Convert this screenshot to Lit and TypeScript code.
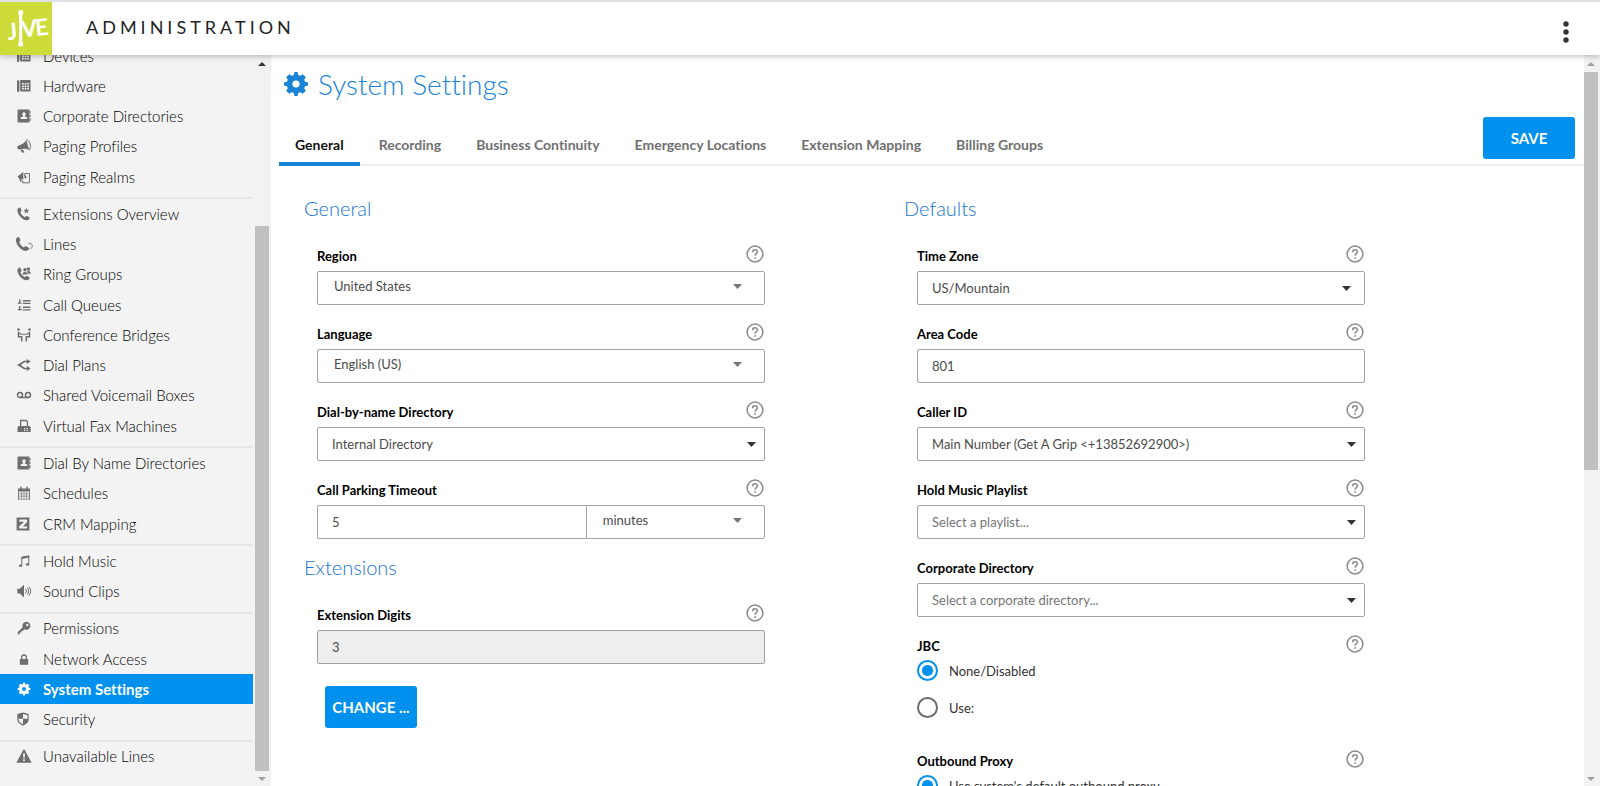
import { LitElement, html, svg, css, nothing, SVGTemplateResult } from "lit";
import { customElement, property, state } from "lit/decorators.js";
import { classMap } from "lit/directives/class-map.js";

const GEAR =
  "M8.7 0h2.6l.5 2.5 1.7.7L15.6 1.8l2.6 2.6-1.4 2.1.7 1.7 2.5.5v2.6l-2.5.5-.7 1.7 1.4 2.1-2.6 2.6-2.1-1.4-1.7.7-.5 2.5H8.7l-.5-2.5-1.7-.7-2.1 1.4-2.6-2.6 1.4-2.1-.7-1.7L0 11.3V8.7l2.5-.5.7-1.7-1.4-2.1 2.6-2.6 2.1 1.4 1.7-.7zM10 7a3 3 0 1 0 0 6 3 3 0 0 0 0-6z";

const HANDSET =
  "M1.2 1.2C2.2.1 3.2.4 3.7 1.5l.8 1.7c.2.6 0 1-.6 1.5-.5.4-.5.7-.2 1.3.8 1.6 1.9 2.8 3.4 3.7.6.4 1 .4 1.4-.1.5-.6.9-.8 1.5-.5l1.9 1c1 .5 1.1 1.3.2 2.2-1.4 1.4-3.6 1.4-6-.1C3.6 10.5 1.7 8.2.8 5.6.2 3.8.2 2.3 1.2 1.2z";

const ICONS: Record<string, SVGTemplateResult> = {
  phone: svg`<path fill-rule="evenodd" d="M0 1.5h2.4v9.8L1.8 13H.6L0 12zM3.2 1h10.3v11.5H3.2zM5 4v1.6h1.8V4zm2.6 0v1.6h1.8V4zm2.6 0v1.6H12V4zM5 6.4V8h1.8V6.4zm2.6 0V8h1.8V6.4zm2.6 0V8H12V6.4zM5 8.8v1.6h1.8V8.8zm2.6 0v1.6h1.8V8.8zm2.6 0v1.6H12V8.8z"/>`,
  book: svg`<path fill-rule="evenodd" d="M1.5.5h10.9v13H1.5a1 1 0 0 1-1-1v-11a1 1 0 0 1 1-1zM7 3.2c-1.2 0-1.8.9-1.7 2 .1.9.4 1.4.8 1.8v.6l-2.4 1V10h6.6V8.6l-2.4-1V7c.5-.4.8-.9.8-1.8.1-1.1-.5-2-1.7-2z"/><path d="M12.4 2h1.2v2.3h-1.2zM12.4 5.8h1.2v2.3h-1.2zM12.4 9.6h1.2v2.3h-1.2z"/>`,
  horn: svg`<path d="M.3 8.2C.3 7 1.2 6.6 2.6 6.2 5.5 5.2 7.8 3.5 9.3 1l2.9 10c-2.4-1.2-4.6-1.6-7.2-1.1l-2.7.5C1 10.5.3 9.6.3 8.2zM3.4 10.8l2.4-.3 1.7 3-2.3.3z"/><path d="M9.4.8c1.9-.2 3.9 3.2 4 6.4 0 2.2-.5 3.7-1.3 3.9" fill="none" stroke="currentColor" stroke-width="1"/>`,
  realm: svg`<path d="M.5 6.5 6.3 2v7.5l-2-.6.4 2.6H3L2.4 8.800z"/><path d="M7.5 3.5h4.9v9.3H5.6v-2.3M7.8 4v2.5" fill="none" stroke="currentColor" stroke-width="1"/><path d="M7.5 4.5 10 7.2 7.500 9z"/>`,
  overview: svg`<path d="${HANDSET}"/><path d="m9.3.8.8 2 2.1.1-1.6 1.4.6 2.1-1.900-1.200-1.800 1.200.6-2.100-1.700-1.400 2.200-.1z"/>`,
  lines: svg`<g transform="translate(-1.5 -.5) scale(1.08)"><path d="${HANDSET}"/></g><path d="M11.5 6.600c2.200-.4 3.800.5 3.800 2.200 0 1.500-.7 2.600-2 3.200" fill="none" stroke="currentColor" stroke-width=".9"/>`,
  ring: svg`<path d="${HANDSET}"/><circle cx="8" cy="2.8" r="1.7"/><circle cx="11.4" cy="2" r="1.7"/><path d="M5.5 7.4c0-1.6 1-2.4 2.5-2.4s2.300.8 2.300 2.400zM10 4.500c2.400-1 3.700 0 3.700 2.200h-3z"/>`,
  queue: svg`<path d="M5.8 2h7.7v1.4H5.8zM5.8 4.7h7.7v1.2H5.8zM5.8 8.5h7.7v1.4H5.8zM5.8 11.2h7.7v1.4H5.8zM2 1.5h1.4v3h1.2v1.3H.8V4.5H2zM2 8h1.4v3h1.2v1.3H.8V11H2z"/>`,
  bridge: svg`<circle cx="1.5" cy="1.5" r="1.3"/><circle cx="12.5" cy="1.5" r="1.3"/><path d="M1.5 3.8v5h3.2v4.7M12.5 3.8v5H9.3v4.7" fill="none" stroke="currentColor" stroke-width="1.5"/><path d="M1.5 4.5 4 6.2h6l2.5-1.7" fill="none" stroke="currentColor" stroke-width="1.1"/>`,
  plan: svg`<path d="M10.5 3.5H7.2L2 7l5.2 3.5h3.3" fill="none" stroke="currentColor" stroke-width="1.6"/><path d="M9.8.9 13.7 3.5 9.8 6.1zM9.8 7.9l3.9 2.6-3.9 2.6zM0 7l4.2-2v4z"/>`,
  voicemail: svg`<circle cx="3" cy="7" r="2.5" fill="none" stroke="currentColor" stroke-width="1.5"/><circle cx="11" cy="7" r="2.5" fill="none" stroke="currentColor" stroke-width="1.5"/><path d="M3 8.8h8v1.5H3z"/>`,
  fax: svg`<path d="M3.6 7V1.5h5.2l1.7 1.6V7" fill="none" stroke="currentColor" stroke-width="1.3"/><path fill-rule="evenodd" d="M1.5 7h11l1.2 1.5V13H.5V8.5zM7 9v1.2h1.3V9zm2.5 0v1.2h1.3V9zM7 11v1h1.3v-1zm2.5 0v1h1.3v-1z"/>`,
  calendar: svg`<path fill-rule="evenodd" d="M1 2.5h12v11H1zm.9 3v7.2h10.2V5.5z"/><path d="M3.2.8h1.6v2.4H3.2zM9.2.8h1.6v2.4H9.2z"/><path d="M2 7.8h10M2 10.2h10M4.5 5.5v7M7 5.5v7M9.5 5.5v7" stroke="currentColor" stroke-width=".6"/>`,
  crm: svg`<path fill-rule="evenodd" d="M-.4.5h12.8v13H-.4zM2.4 2.6v2.2h4.700L2.2 9.3V11.6h7.9V9.4H5.8l4.3-4.3V2.6z"/>`,
  music: svg`<path d="M4.8 3.2 11.8 2v8.2M4.8 11.5V3.2" fill="none" stroke="currentColor" stroke-width="1"/><path d="M4.6 3l7.5-1.4v2L4.6 5z"/><ellipse cx="3.6" cy="11.7" rx="1.7" ry="1.2"/><ellipse cx="10.5" cy="10.5" rx="1.7" ry="1.2"/>`,
  sound: svg`<path d="M.3 4.8h2.5L7 .8v12.7L2.8 9.5H.3z"/><path d="M8.6 5a3 3 0 0 1 0 4.3M10.2 3.8a5 5 0 0 1 0 6.7M11.9 2.7a7 7 0 0 1 0 8.9" fill="none" stroke="currentColor" stroke-width="1"/>`,
  key: svg`<path fill-rule="evenodd" d="M9.5.8a4 4 0 1 1-2 7.5L6.3 9.5 4.8 9.8l-.3 1.5-1.5.3-.5 1.7H.7v-2l5-5A4 4 0 0 1 9.5.8zm.8 2a1.2 1.2 0 1 0 0 2.4 1.2 1.2 0 0 0 0-2.4z"/>`,
  lock: svg`<path d="M2.8 7h8.4v5.8H2.8z"/><path d="M4.7 7.5V5.3a2.3 2.3 0 0 1 4.6 0v2.2" fill="none" stroke="currentColor" stroke-width="1.3"/>`,
  gear: svg`<g transform="translate(.5 .5) scale(.65)"><path fill-rule="evenodd" d="${GEAR}"/></g>`,
  shield: svg`<path d="M6 .5 11.7 2v5.3c0 3-2.5 4.9-5.7 6.4C2.8 12.2.3 10.3.3 7.3V2z"/><path fill="#f3f3f3" d="M6 2v4.8h4.6V3.2zM1.5 6.8H6v5.5C3.4 11 1.5 9.5 1.5 7z"/>`,
  warning: svg`<path fill-rule="evenodd" d="M7-.3 14.7 13.7H-.7zM6 4.5l.4 4.7h1.2L8 4.5zm.1 5.700V12h1.800v-1.800z"/>`,
};

const icon = (name: string) =>
  html`<svg class="glyph" viewBox="0 0 14 14" width="14" height="14" fill="currentColor" aria-hidden="true">${ICONS[name]}</svg>`;

const NAV: [string, string][][] = [
  [["phone", "Devices"], ["phone", "Hardware"], ["book", "Corporate Directories"], ["horn", "Paging Profiles"], ["realm", "Paging Realms"]],
  [["overview", "Extensions Overview"], ["lines", "Lines"], ["ring", "Ring Groups"], ["queue", "Call Queues"], ["bridge", "Conference Bridges"], ["plan", "Dial Plans"], ["voicemail", "Shared Voicemail Boxes"], ["fax", "Virtual Fax Machines"]],
  [["book", "Dial By Name Directories"], ["calendar", "Schedules"], ["crm", "CRM Mapping"]],
  [["music", "Hold Music"], ["sound", "Sound Clips"]],
  [["key", "Permissions"], ["lock", "Network Access"], ["gear", "System Settings"], ["shield", "Security"]],
  [["warning", "Unavailable Lines"]],
];

const TABS = ["General", "Recording", "Business Continuity", "Emergency Locations", "Extension Mapping", "Billing Groups"];

@customElement("scroll-rail")
class ScrollRail extends LitElement {
  @property({ reflect: true }) variant = "page";

  static styles = css`
    :host {
      display: flex;
      flex-direction: column;
      flex: none;
      width: 16px;
      padding-right: 2px;
      box-sizing: border-box;
      background: #f2f2f2;
    }
    .end {
      flex: none;
      display: grid;
      place-items: center;
      height: 15px;
      color: #a0a0a0;
    }
    .up { height: 17px; }
    .track { flex: 1; display: flex; flex-direction: column; }
    .thumb { height: 57%; background: #c0c0c0; }
    :host([variant="menu"]) .thumb { height: 78%; margin-top: auto; }
    :host([variant="menu"]) .up { color: #333; }
  `;

  render() {
    return html`
      <div class="end up"><svg width="8" height="4" viewBox="0 0 8 4"><path fill="currentColor" d="M4 0l4 4H0z" /></svg></div>
      <div class="track"><div class="thumb"></div></div>
      <div class="end"><svg width="8" height="4" viewBox="0 0 8 4"><path fill="currentColor" d="M0 0h8L4 4z" /></svg></div>
    `;
  }
}

@customElement("app-root")
class AppRoot extends LitElement {
  @state() private page = "System Settings";
  @state() private tab = "General";

  static styles = css`
    :host {
      display: flex;
      flex-direction: column;
      height: 100vh;
      overflow: hidden;
      background: #fff;
      color: #222;
      font-family: Lato, "Open Sans", sans-serif;
      font-size: 14px;
      font-variant-ligatures: none;
    }
    * { box-sizing: border-box; }
    h1, h2, ul { margin: 0; padding: 0; font-weight: 300; list-style: none; }
    a { color: inherit; text-decoration: none; }
    button, input, select { font: inherit; font-variant-ligatures: none; margin: 0; }
    svg { display: block; }

    .header {
      position: relative;
      z-index: 1;
      flex: none;
      display: flex;
      align-items: center;
      height: 55px;
      border-top: 2px solid #e0e0e6;
      background: #fff;
      box-shadow: 0 1px 6px rgba(0, 0, 0, 0.28);
    }
    .logo { width: 52px; height: 53px; background: #cddc39; }
    .mark { font-family: Lato, sans-serif; font-size: 23px; font-weight: 700; fill: #fff; }
    .brand { margin-left: 34px; padding-bottom: 4px; font-size: 18px; letter-spacing: 4px; color: #1f1f1f; }
    .more {
      margin-left: auto;
      margin-right: 23px;
      padding: 6px 8px 0;
      border: 0;
      background: none;
      color: #333;
    }

    .body { flex: 1; display: flex; min-height: 0; }
    .sidebar { flex: none; display: flex; width: 271px; background: #f3f3f3; overflow: hidden; }
    .menu { flex: 1; display: flex; flex-direction: column; justify-content: flex-end; margin: -14px 2px 0 0; padding-bottom: 14px; }
    .item { flex: 1 0 28px; max-height: 31px; display: flex; }
    .rule { flex: none; height: 7px; border-bottom: 2px solid #e6e6e6; }
    .link { flex: 1; display: flex; align-items: center; gap: 12px; padding: 0 0 1px 17px; font-size: 15px; color: #000; }
    .glyph { flex: none; color: #6e6e6e; overflow: visible; }
    .current { background: #0091ee; color: #fff; font-weight: 700; }
    .current .glyph { color: #fff; }

    .main { flex: 1; min-width: 0; display: flex; }
    .content { flex: 1; min-width: 0; overflow: hidden; }
    .title { display: flex; align-items: center; gap: 10px; padding: 11px 13px 0; font-size: 28px; line-height: 36px; color: #1784d8; }
    .bar { display: flex; align-items: flex-end; margin: 15px 0 0 8px; border-bottom: 2px solid #efefef; }
    .tabs { flex: 1; display: flex; gap: 3px; align-self: stretch; align-items: stretch; }
    .tab {
      margin-bottom: -2px;
      padding: 9px 16px 0;
      border: 0;
      border-bottom: 4px solid transparent;
      background: none;
      font-size: 14px;
      font-weight: 700;
      color: #707070;
    }
    .tab.on { border-color: #1784d8; color: #111; }
    .primary {
      flex: none;
      width: 92px;
      height: 42px;
      padding: 0;
      border: 0;
      border-radius: 3px;
      background: #0091ee;
      color: #fff;
      font-weight: 700;
      font-size: 15px;
    }
    .save { margin: 0 9px 5px 0; }

    .columns { display: grid; grid-template-columns: repeat(2, minmax(0, 600px)); padding: 28px 0 0 33px; }
    .column { display: flex; flex-direction: column; gap: 15px; }
    .heading { margin-bottom: 23px; font-size: 20px; line-height: 28px; color: #1976d2; }
    .column .heading + .fields { margin-bottom: -1px; }
    .fields { display: flex; flex-direction: column; gap: 18px; width: 448px; max-width: 90%; margin-left: 13px; }
    .top { display: flex; justify-content: space-between; align-items: flex-start; height: 26px; padding-right: 1px; }
    .label { font-size: 13px; font-weight: 700; line-height: 22px; color: #000; }
    .help { padding: 0; border: 0; background: none; color: #8a8a8a; }
    .box { position: relative; display: flex; }
    .control {
      flex: 1;
      min-width: 0;
      height: 34px;
      padding: 0 14px;
      border: 1px solid #a3a3a3;
      border-radius: 2px;
      background: #fff;
      color: #4c4c4c;
      font-size: 13px;
      outline: none;
      appearance: none;
    }
    .raised { padding: 0 16px 4px; }
    .blank { color: #757575; }
    .control:disabled { background: #eee; opacity: 1; }
    .amount { flex: 0 0 60%; border-right: 0; border-radius: 2px 0 0 2px; }
    .unit { border-radius: 0 2px 2px 0; }
    .arrow { position: absolute; right: 9px; top: 15px; color: #333; pointer-events: none; }
    .arrow.inset { right: 14px; }
    .arrow.soft { right: 23px; top: 13px; color: #777; }
    .change { margin: 4px 0 0 8px; }
    .choices { display: flex; flex-direction: column; gap: 18px; margin-bottom: 15px; }
    .choice { display: flex; align-items: center; gap: 11px; height: 19px; font-size: 13px; color: #333; }
    .radio {
      flex: none;
      appearance: none;
      width: 21px;
      height: 21px;
      margin: 0;
      border: 2px solid #6b6b6b;
      border-radius: 50%;
      background: #fff;
    }
    .radio:checked { border-color: #0091ee; background: radial-gradient(circle, #0091ee 5px, #fff 6px); }
  `;

  private top(label: string, id: string) {
    return html`<div class="top">
      ${id ? html`<label class="label" for=${id}>${label}</label>` : html`<span class="label">${label}</span>`}
      <button class="help" type="button" aria-label="Help: ${label}">
        <svg width="18" height="18" viewBox="0 0 18 18" fill="none" stroke="currentColor" stroke-width="1.5">
          <circle cx="9" cy="9" r="7.9" />
          <path d="M6.6 7.3C6.6 5.7 7.6 4.8 9 4.8s2.4.9 2.4 2.2c0 1.6-2.3 1.8-2.3 3.7" />
          <circle cx="9.1" cy="12.9" r=".9" fill="currentColor" stroke="none" />
        </svg>
      </button>
    </div>`;
  }

  private arrow(kind = "") {
    return html`<svg class="arrow ${kind}" width="9" height="5" viewBox="0 0 9 5" aria-hidden="true"><path fill="currentColor" d="M0 0h9L4.5 5z" /></svg>`;
  }

  private select(label: string, id: string, value: string, kind = "", tone = "") {
    return html`<div>
      ${this.top(label, id)}
      <div class="box">
        <select class="control ${tone}" id=${id}><option>${value}</option></select>
        ${this.arrow(kind)}
      </div>
    </div>`;
  }

  private input(label: string, id: string, value: string, disabled = false) {
    return html`<div>
      ${this.top(label, id)}
      <div class="box"><input class="control" id=${id} .value=${value} ?disabled=${disabled} /></div>
    </div>`;
  }

  private choices(label: string, name: string, options: string[]) {
    return html`<div role="radiogroup" aria-label=${label}>
      ${this.top(label, "")}
      <div class="choices">
        ${options.map(
          (o, i) => html`<label class="choice"><input class="radio" type="radio" name=${name} ?checked=${i === 0} />${o}</label>`
        )}
      </div>
    </div>`;
  }

  render() {
    return html`
      <header class="header">
        <svg class="logo" viewBox="0 0 52 53" role="img" aria-label="Jive">
          <g transform="rotate(-6 26 26)">
            <text class="mark" x="7" y="36">J</text>
            <text class="mark" x="21" y="35">V</text>
            <text class="mark" x="35" y="35">E</text>
          </g>
          <path d="M20.7 11v31" stroke="#fff" stroke-width="3" />
          <circle cx="20.7" cy="10.5" r="2.6" fill="#fff" />
          <circle cx="20.7" cy="42" r="2.6" fill="#fff" />
        </svg>
        <span class="brand">ADMINISTRATION</span>
        <button class="more" type="button" aria-label="More">
          <svg width="6" height="22" viewBox="0 0 6 22" fill="currentColor"><circle cx="3" cy="3" r="2.7" /><circle cx="3" cy="11" r="2.7" /><circle cx="3" cy="19" r="2.7" /></svg>
        </button>
      </header>
      <div class="body">
        <nav class="sidebar">
          <ul class="menu">
            ${NAV.map(
              (group, g) => html`
                ${g ? html`<li class="rule" role="separator"></li>` : nothing}
                ${group.map(
                  ([glyph, text]) => html`<li class="item">
                    <a class=${classMap({ link: true, current: text === this.page })} href="#" @click=${(e: Event) => { e.preventDefault(); this.page = text; }}>${icon(glyph)}${text}</a>
                  </li>`
                )}
              `
            )}
          </ul>
          <scroll-rail variant="menu"></scroll-rail>
        </nav>
        <main class="main">
          <div class="content">
            <h1 class="title">
              <svg width="24" height="24" viewBox="0 0 20 20" fill="currentColor" aria-hidden="true"><path fill-rule="evenodd" d=${GEAR} /></svg>
              System Settings
            </h1>
            <div class="bar">
              <div class="tabs" role="tablist">
                ${TABS.map(
                  (t) => html`<button class=${classMap({ tab: true, on: t === this.tab })} role="tab" aria-selected=${t === this.tab} @click=${() => (this.tab = t)}>${t}</button>`
                )}
              </div>
              <button class="primary save" type="button">SAVE</button>
            </div>
            <div class="columns">
              <div class="column">
                <section>
                  <h2 class="heading">General</h2>
                  <div class="fields">
                    ${this.select("Region", "region", "United States", "soft", "raised")}
                    ${this.select("Language", "language", "English (US)", "soft", "raised")}
                    ${this.select("Dial-by-name Directory", "dial", "Internal Directory")}
                    <div>
                      ${this.top("Call Parking Timeout", "timeout")}
                      <div class="box">
                        <input class="control amount" id="timeout" value="5" />
                        <select class="control unit raised" aria-label="Timeout unit"><option>minutes</option></select>
                        ${this.arrow("soft")}
                      </div>
                    </div>
                  </div>
                </section>
                <section>
                  <h2 class="heading">Extensions</h2>
                  <div class="fields">
                    ${this.input("Extension Digits", "digits", "3", true)}
                    <button class="primary change" type="button">CHANGE ...</button>
                  </div>
                </section>
              </div>
              <section>
                <h2 class="heading">Defaults</h2>
                <div class="fields">
                  ${this.select("Time Zone", "zone", "US/Mountain", "inset")}
                  ${this.input("Area Code", "area", "801")}
                  ${this.select("Caller ID", "caller", "Main Number (Get A Grip <+13852692900>)")}
                  ${this.select("Hold Music Playlist", "playlist", "Select a playlist...", "", "blank")}
                  ${this.select("Corporate Directory", "corporate", "Select a corporate directory...", "", "blank")}
                  ${this.choices("JBC", "jbc", ["None/Disabled", "Use:"])}
                  ${this.choices("Outbound Proxy", "proxy", ["Use system's default outbound proxy"])}
                </div>
              </section>
            </div>
          </div>
          <scroll-rail></scroll-rail>
        </main>
      </div>
    `;
  }
}
